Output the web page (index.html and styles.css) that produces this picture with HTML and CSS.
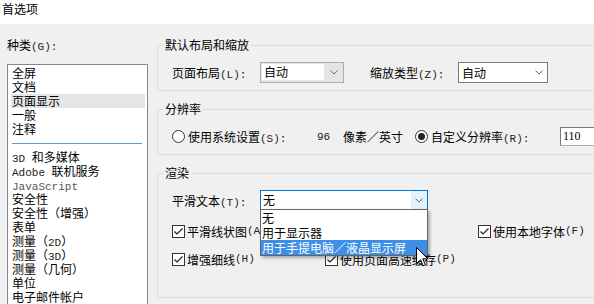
FILE: index.html
```html
<!DOCTYPE html>
<html lang="zh-CN">
<head>
<meta charset="UTF-8">
<title>首选项</title>
<link rel="stylesheet" href="styles.css">
</head>
<body>
    <div class="titlebar">首选项</div>

    <div class="main">
        <div class="cats">
            <div class="cap">种类<span class="k">(G):</span></div>
            <ul class="list">
                <li>全屏</li>
                <li>文档</li>
                <li class="sel">页面显示</li>
                <li>一般</li>
                <li>注释</li>
                <li class="sep"></li>
                <li><span class="k">3D </span>和多媒体</li>
                <li><span class="k">Adobe </span>联机服务</li>
                <li><span class="k dim">JavaScript</span></li>
                <li>安全性</li>
                <li>安全性（增强）</li>
                <li>表单</li>
                <li>测量（<span class="k">2D</span>）</li>
                <li>测量（<span class="k">3D</span>）</li>
                <li>测量（几何）</li>
                <li>单位</li>
                <li>电子邮件帐户</li>
                <li>身份信息</li>
            </ul>
        </div>

        <div class="panels">
            <fieldset class="grp g1">
                <legend>默认布局和缩放</legend>
                <div class="row">
                    <span class="lbl">页面布局<span class="k">(L):</span></span>
                    <div class="combo gray">
                        <span class="val">自动</span>
                        <span class="arr"><svg width="8" height="5" viewBox="0 0 8 5"><polyline points="0.5,0.5 4,4 7.5,0.5" fill="none" stroke="#6b6b6b"/></svg></span>
                    </div>
                    <span class="lbl second">缩放类型<span class="k">(Z):</span></span>
                    <div class="combo wide">
                        <span class="val">自动</span>
                        <span class="arr"><svg width="8" height="5" viewBox="0 0 8 5"><polyline points="0.5,0.5 4,4 7.5,0.5" fill="none" stroke="#6b6b6b"/></svg></span>
                    </div>
                </div>
            </fieldset>

            <fieldset class="grp g2">
                <legend>分辨率</legend>
                <div class="row">
                    <span class="rd"></span>
                    <span class="sys">使用系统设置<span class="k">(S):</span></span>
                    <span class="num k">96</span>
                    <span class="unit">像素／英寸</span>
                    <span class="rd on"></span>
                    <span class="sys">自定义分辨率<span class="k">(R):</span></span>
                    <input class="res" type="text" value="110">
                </div>
            </fieldset>

            <fieldset class="grp g3">
                <legend>渲染</legend>
                <div class="row">
                    <span class="lbl">平滑文本<span class="k">(T):</span></span>
                    <div class="combo focus">
                        <span class="val">无</span>
                        <span class="arr"><svg width="8" height="5" viewBox="0 0 8 5"><polyline points="0.5,0.5 4,4 7.5,0.5" fill="none" stroke="#6b6b6b"/></svg></span>
                        <ul class="popup">
                            <li>无</li>
                            <li>用于显示器</li>
                            <li class="hi">用于手提电脑／液晶显示屏</li>
                        </ul>
                    </div>
                </div>
                <div class="row chks">
                    <label class="chk long"><span class="cb"><svg width="11" height="11" viewBox="0 0 11 11"><polyline points="1.5,5.5 4,8 9.5,2.5" fill="none" stroke="#222" stroke-width="1.2"/></svg></span>平滑线状图<span class="k">(A)</span></label>
                    <label class="chk"><span class="cb"><svg width="11" height="11" viewBox="0 0 11 11"><polyline points="1.5,5.5 4,8 9.5,2.5" fill="none" stroke="#222" stroke-width="1.2"/></svg></span>使用本地字体<span class="k">(F)</span></label>
                </div>
                <div class="row chks">
                    <label class="chk short"><span class="cb"><svg width="11" height="11" viewBox="0 0 11 11"><polyline points="1.5,5.5 4,8 9.5,2.5" fill="none" stroke="#222" stroke-width="1.2"/></svg></span>增强细线<span class="k">(H)</span></label>
                    <label class="chk"><span class="cb"><svg width="11" height="11" viewBox="0 0 11 11"><polyline points="1.5,5.5 4,8 9.5,2.5" fill="none" stroke="#222" stroke-width="1.2"/></svg></span>使用页面高速缓存<span class="k">(P)</span></label>
                </div>
            </fieldset>
        </div>
    </div>

    <!-- mouse pointer over the open list -->
    <svg class="cursor" width="13" height="20" viewBox="0 0 13 20">
        <path d="M0.5 0.5 L0.5 16.5 L4.5 12.7 L7.2 18.8 L9.4 17.8 L6.8 11.8 L11.8 11.8 Z" fill="#fff" stroke="#000" stroke-linejoin="round"/>
    </svg>
</body>
</html>
```

FILE: styles.css
```css
body {
    margin: 0;
    width: 594px;
    height: 304px;
    overflow: hidden;
    position: relative;
    background: #f0f0f0;
    font-family: "Noto Sans CJK SC", sans-serif;
    font-size: 12px;
    color: #000;
}

.titlebar {
    height: 24px;
    box-sizing: border-box;
    padding: 1px 2px 0;
    line-height: 16px;
    background: #fff;
}

.k {
    font-family: "Liberation Mono", monospace;
    font-size: 11px;
    color: #222;
}

.dim {
    color: #555;
}

.main {
    display: flex;
    gap: 9px;
    height: 280px;
    box-sizing: border-box;
    overflow: hidden;
    padding: 14px 0 0 7px;
}

.cats {
    width: 141px;
    flex: none;
}

.cap {
    line-height: 14px;
    margin-bottom: 10px;
}

.list {
    list-style: none;
    margin: 0;
    padding: 1px 2px 0 3px;
    height: 240px;
    overflow: hidden;
    background: #fff;
    border: 1px solid #828790;
    border-bottom: none;
}

.list li {
    line-height: 14px;
    height: 14px;
    padding-left: 1px;
    white-space: nowrap;
}

.list .sel {
    background: #e5e5e5;
}

.list .sep {
    margin: 0 3px 0 1px;
    background: linear-gradient(#5b9bd5, #5b9bd5) no-repeat 0 7px / 100% 1px;
}

.panels {
    width: 460px;
    flex: none;
    display: flex;
    flex-direction: column;
    gap: 11px;
}

.grp {
    margin: 0;
    padding: 0 5px 7px;
    border: 1px solid #dcdcdc;
    min-width: 0;
}

.grp legend {
    padding: 0 2px;
    line-height: 14px;
}

.row {
    display: flex;
    align-items: center;
    padding-left: 9px;
    white-space: nowrap;
}

.g1 .row {
    margin-top: 10px;
    height: 21px;
}

.g2 {
    padding-bottom: 8px;
}

.g2 .row {
    margin-top: 11px;
    height: 19px;
}

.g3 {
    padding-bottom: 31px;
}

.g3 .row {
    margin-top: 10px;
    height: 20px;
}

.g3 .chks {
    margin-top: 14px;
    height: 14px;
}

.lbl {
    width: 88px;
    flex: none;
}

.lbl.second {
    margin-left: 26px;
}

.combo {
    position: relative;
    display: flex;
    flex: none;
    width: 84px;
    height: 21px;
    box-sizing: border-box;
    border: 1px solid #7a7a7a;
    background: #fff;
}

.combo .val {
    flex: 1;
    padding-left: 3px;
    line-height: 19px;
}

.combo .arr {
    width: 17px;
    display: flex;
    align-items: center;
    justify-content: center;
}

.combo.gray {
    background: #e5e5e5;
    border-color: #adadad;
}

.combo.gray .val {
    background: #fff;
    margin: 1px 0 2px 1px;
    padding-left: 2px;
    line-height: 16px;
}

.combo.gray .arr {
    width: 19px;
}

.combo.wide {
    width: 90px;
}

.combo.focus {
    width: 168px;
    height: 20px;
    border-color: #0078d7;
    z-index: 2;
}

.combo.focus .val {
    line-height: 18px;
    padding-left: 2px;
}

.combo.focus .arr {
    width: 16px;
    background: #e5f1fb;
}

.popup {
    position: absolute;
    top: 100%;
    left: -1px;
    width: 168px;
    box-sizing: border-box;
    margin: 0;
    padding: 0;
    list-style: none;
    background: #fff;
    border: 1px solid #646464;
    box-shadow: 2px 2px 3px rgba(0, 0, 0, 0.3);
}

.popup li {
    line-height: 15px;
    height: 15px;
    padding-left: 1px;
}

.popup .hi {
    background: #3d8ee6;
    color: #fff;
}

.rd {
    width: 13px;
    height: 13px;
    flex: none;
    box-sizing: border-box;
    border: 1px solid #333;
    border-radius: 50%;
    background: #fff;
    margin-right: 3px;
    display: flex;
    align-items: center;
    justify-content: center;
}

.rd.on::after {
    content: "";
    width: 7px;
    height: 7px;
    border-radius: 50%;
    background: #222;
}

.sys {
    width: 129px;
    flex: none;
}

.num {
    width: 26px;
    flex: none;
}

.unit {
    width: 72px;
    flex: none;
}

.res {
    width: 60px;
    height: 19px;
    box-sizing: border-box;
    margin: 0;
    padding: 0 2px;
    border: 1px solid #abadb3;
    border-top-color: #7a7a7a;
    border-left-color: #7a7a7a;
    background: #fff;
    font-family: "Liberation Serif", serif;
    font-size: 12px;
    outline: none;
}

.chk {
    display: flex;
    align-items: center;
    flex: none;
}

.chk.long {
    width: 306px;
}

.chk.short {
    width: 153px;
}

.cb {
    width: 13px;
    height: 13px;
    box-sizing: border-box;
    border: 1px solid #333;
    background: #fff;
    margin-right: 2px;
    display: flex;
}

.cursor {
    position: absolute;
    left: 416px;
    top: 247px;
    z-index: 5;
}
```
